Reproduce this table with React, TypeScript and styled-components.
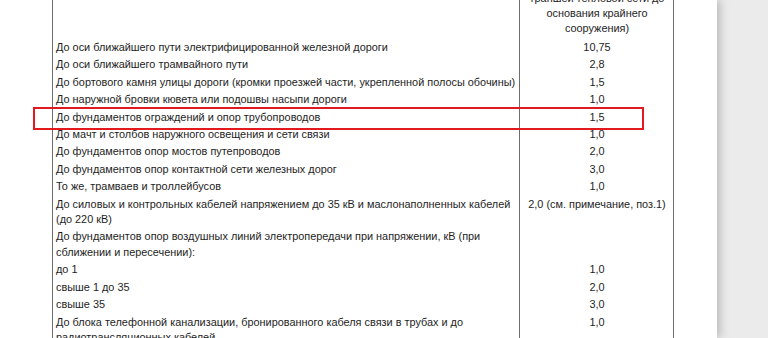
import styled, { createGlobalStyle } from "styled-components";

const GlobalStyle = createGlobalStyle`
  html, body {
    margin: 0;
    padding: 0;
    background: #ebebeb;
    font-family: "Liberation Sans", Arial, sans-serif;
  }
`;

const Viewer = styled.div`
  display: flex;
  height: 338px;
  overflow: hidden;
`;

const Sheet = styled.div`
  position: relative;
  width: 717px;
  flex-shrink: 0;
  background: #fff;
  box-shadow: 3px 0 9px rgba(0, 0, 0, 0.22);
  padding-left: 52px;
  box-sizing: border-box;
`;

const Table = styled.table`
  margin-top: -10px;
  border-collapse: collapse;
  width: 621px;
  table-layout: fixed;
  font-size: 10.9px;
  line-height: 15.4px;
  color: #1e1e1e;
`;

const Cell = styled.td<{ $center?: boolean; $head?: boolean }>`
  border-left: 1px solid #6e6e6e;
  border-right: 1px solid #6e6e6e;
  padding: ${(p) => (p.$head ? "1px 2px 3px 3px" : "1px 2px 1px 3px")};
  vertical-align: top;
  white-space: nowrap;
  overflow: hidden;
  text-align: ${(p) => (p.$center ? "center" : "left")};
`;

const Line = styled.div``;

const HeadLine = styled.div`
  line-height: 15px;
`;

const Highlight = styled.div`
  position: absolute;
  left: 33px;
  top: 107px;
  width: 611px;
  height: 23px;
  border: 2px solid #e2191f;
  box-sizing: border-box;
  pointer-events: none;
`;

type Row = { name: string[]; value: string };

const rows: Row[] = [
  { name: ["До оси ближайшего пути электрифицированной железной дороги"], value: "10,75" },
  { name: ["До оси ближайшего трамвайного пути"], value: "2,8" },
  { name: ["До бортового камня улицы дороги (кромки проезжей части, укрепленной полосы обочины)"], value: "1,5" },
  { name: ["До наружной бровки кювета или подошвы насыпи дороги"], value: "1,0" },
  { name: ["До фундаментов ограждений и опор трубопроводов"], value: "1,5" },
  { name: ["До мачт и столбов наружного освещения и сети связи"], value: "1,0" },
  { name: ["До фундаментов опор мостов путепроводов"], value: "2,0" },
  { name: ["До фундаментов опор контактной сети железных дорог"], value: "3,0" },
  { name: ["То же, трамваев и троллейбусов"], value: "1,0" },
  {
    name: ["До силовых и контрольных кабелей напряжением до 35 кВ и маслонаполненных кабелей", "(до 220 кВ)"],
    value: "2,0 (см. примечание, поз.1)",
  },
  {
    name: ["До фундаментов опор воздушных линий электропередачи при напряжении, кВ (при", "сближении и пересечении):"],
    value: "",
  },
  { name: ["до 1"], value: "1,0" },
  { name: ["свыше 1 до 35"], value: "2,0" },
  { name: ["свыше 35"], value: "3,0" },
  {
    name: ["До блока телефонной канализации, бронированного кабеля связи в трубах и до", "радиотрансляционных кабелей"],
    value: "1,0",
  },
];

export default function App() {
  return (
    <>
      <GlobalStyle />
      <Viewer>
        <Sheet>
          <Table>
            <colgroup>
              <col style={{ width: 467 }} />
              <col style={{ width: 154 }} />
            </colgroup>
            <tbody>
              <tr>
                <Cell $head />
                <Cell $head $center>
                  <HeadLine>траншей тепловой сети до</HeadLine>
                  <HeadLine>основания крайнего</HeadLine>
                  <HeadLine>сооружения)</HeadLine>
                </Cell>
              </tr>
              {rows.map((r) => (
                <tr key={r.name[0]}>
                  <Cell>
                    {r.name.map((l) => (
                      <Line key={l}>{l}</Line>
                    ))}
                  </Cell>
                  <Cell $center>{r.value}</Cell>
                </tr>
              ))}
            </tbody>
          </Table>
          <Highlight />
        </Sheet>
      </Viewer>
    </>
  );
}
